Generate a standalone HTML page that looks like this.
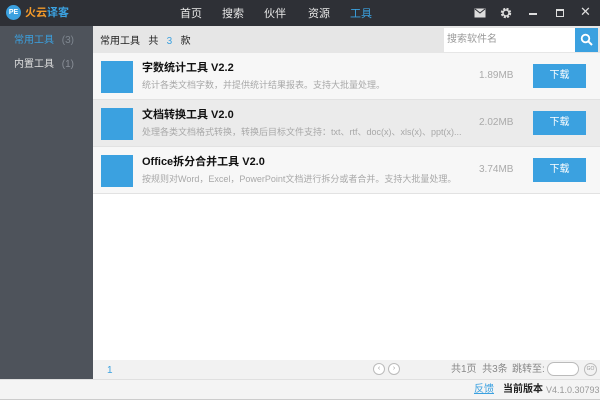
<!DOCTYPE html>
<html><head><meta charset="utf-8"><style>
*{margin:0;padding:0;box-sizing:border-box}
body{width:600px;height:400px;overflow:hidden;font-family:"Liberation Sans","Noto Sans CJK SC",sans-serif;font-size:10px;line-height:12px;background:#fff;position:relative}
.top{position:absolute;left:0;top:0;width:600px;height:26px;background:#2e3036}
.abs{position:absolute;white-space:nowrap}
.nav{color:#e8e8e8;font-size:11px;top:8px}
.side{position:absolute;left:0;top:26px;width:93px;height:353px;background:#4e535b}
.hdr{position:absolute;left:93px;top:26px;width:507px;height:27px;background:#e6e6e6}
.row{position:absolute;left:93px;width:507px;height:47px;border-bottom:1px solid #e2e2e2}
.sq{position:absolute;left:8px;top:8px;width:32px;height:32px;background:#3ba1e0}
.t{position:absolute;left:49px;top:9px;font-size:11px;font-weight:bold;color:#111}
.d{position:absolute;left:49px;top:26px;font-size:9px;color:#a8a8a8;white-space:nowrap}
.sz{position:absolute;left:386px;top:17px;font-size:10px;color:#aaa}
.btn{position:absolute;left:440px;top:11px;width:53px;height:24px;background:#3ba1e0;color:#fff;font-size:10px;text-align:center;line-height:24px}
.pg{position:absolute;left:93px;top:360px;width:507px;height:19px;background:#f2f2f2}
.foot{position:absolute;left:0;top:379px;width:600px;height:21px;background:#f4f4f4;border-top:1px solid #e0e0e0;border-bottom:1px solid #ccc}
</style></head><body>
<div class="top"></div>
<div class="abs" style="left:6px;top:5px;width:15px;height:15px;border-radius:50%;background:#3ba1e0;color:#fff;font-size:7px;font-weight:bold;line-height:15px;text-align:center">PE</div>
<div class="abs" style="left:25px;top:7px;font-size:11px;font-weight:bold"><span style="color:#f39a2a">火云</span><span style="color:#3ba1e0">译客</span></div>
<div class="abs nav" style="left:180px">首页</div>
<div class="abs nav" style="left:222px">搜索</div>
<div class="abs nav" style="left:264px">伙伴</div>
<div class="abs nav" style="left:308px">资源</div>
<div class="abs nav" style="left:350px;color:#3ba1e0">工具</div>
<svg class="abs" style="left:474px;top:8px" width="12" height="10"><rect x="0.5" y="0.5" width="11" height="9" fill="#ddd"/><path d="M1 1L6 5L11 1" stroke="#2e3036" fill="none"/></svg>
<svg class="abs" style="left:500px;top:7px" width="12" height="12"><circle cx="6" cy="6" r="4" fill="none" stroke="#ddd" stroke-width="2.4" stroke-dasharray="2 1.2"/><circle cx="6" cy="6" r="3" fill="none" stroke="#ddd" stroke-width="1.5"/></svg>
<div class="abs" style="left:529px;top:13px;width:8px;height:2px;background:#ddd"></div>
<div class="abs" style="left:556px;top:9px;width:8px;height:8px;border:1px solid #ddd;border-top-width:2px"></div>
<div class="abs" style="left:580px;top:6px;color:#ddd;font-size:13px">✕</div>
<div class="side"></div>
<div class="abs" style="left:14px;top:35px;color:#3ba1e0;font-size:10px">常用工具 <span style="color:#7f8790;margin-left:5px">(3)</span></div>
<div class="abs" style="left:14px;top:59px;color:#e0e0e0;font-size:10px">内置工具 <span style="color:#8a9098;margin-left:5px">(1)</span></div>
<div class="hdr"></div>
<div class="abs" style="left:100px;top:36px;font-size:10px;color:#222">常用工具&nbsp;&nbsp;&nbsp;共&nbsp;&nbsp;&nbsp;<span style="color:#3ba1e0">3</span>&nbsp;&nbsp;&nbsp;款</div>
<div class="abs" style="left:444px;top:28px;width:131px;height:24px;background:#fff;color:#999;font-size:10px;line-height:24px;padding-left:3px">搜索软件名</div>
<div class="abs" style="left:575px;top:28px;width:23px;height:24px;background:#3ba1e0"></div>
<svg class="abs" style="left:580px;top:33px" width="13" height="13"><circle cx="5.5" cy="5.5" r="3.8" fill="none" stroke="#fff" stroke-width="1.8"/><path d="M8.3 8.3L12 12" stroke="#fff" stroke-width="2"/></svg>
<div class="row" style="top:53px;background:#f7f7f7"><div class="sq"></div><div class="t">字数统计工具 V2.2</div><div class="d">统计各类文档字数，并提供统计结果报表。支持大批量处理。</div><div class="sz">1.89MB</div><div class="btn">下载</div></div>
<div class="row" style="top:100px;background:#ebebeb"><div class="sq"></div><div class="t">文档转换工具 V2.0</div><div class="d">处理各类文档格式转换，转换后目标文件支持：txt、rtf、doc(x)、xls(x)、ppt(x)...</div><div class="sz">2.02MB</div><div class="btn">下载</div></div>
<div class="row" style="top:147px;background:#f7f7f7"><div class="sq"></div><div class="t">Office拆分合并工具 V2.0</div><div class="d">按规则对Word，Excel，PowerPoint文档进行拆分或者合并。支持大批量处理。</div><div class="sz">3.74MB</div><div class="btn">下载</div></div>
<div class="pg"></div>
<div class="abs" style="left:107px;top:365px;color:#3ba1e0;font-size:10px">1</div>
<div class="abs" style="left:373px;top:363px;width:12px;height:12px;border:1px solid #bbb;border-radius:50%;background:#fff;font-size:7px;color:#999;text-align:center;line-height:10px">‹</div>
<div class="abs" style="left:388px;top:363px;width:12px;height:12px;border:1px solid #bbb;border-radius:50%;background:#fff;font-size:7px;color:#999;text-align:center;line-height:10px">›</div>
<div class="abs" style="left:451px;top:364px;color:#888;font-size:10px">共1页&nbsp;&nbsp;共3条</div>
<div class="abs" style="left:512px;top:364px;color:#888;font-size:10px">跳转至:</div>
<div class="abs" style="left:547px;top:362px;width:32px;height:14px;border:1px solid #bbb;border-radius:7px;background:#fff"></div>
<div class="abs" style="left:584px;top:363px;width:13px;height:13px;border:1px solid #bbb;border-radius:50%;font-size:5px;color:#999;text-align:center;line-height:11px">GO</div>
<div class="foot"></div>
<div class="abs" style="left:474px;top:384px;color:#3ba1e0;font-size:10px;text-decoration:underline">反馈</div>
<div class="abs" style="left:503px;top:384px;color:#222;font-size:10px;font-weight:bold">当前版本</div>
<div class="abs" style="left:546px;top:384px;color:#999;font-size:9px">V4.1.0.30793</div>
</body></html>
